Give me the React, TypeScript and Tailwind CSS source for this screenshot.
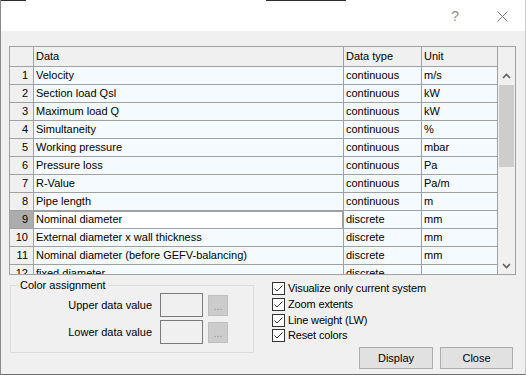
import React from "react"

const rows = [
  ["1", "Velocity", "continuous", "m/s"],
  ["2", "Section load Qsl", "continuous", "kW"],
  ["3", "Maximum load Q", "continuous", "kW"],
  ["4", "Simultaneity", "continuous", "%"],
  ["5", "Working pressure", "continuous", "mbar"],
  ["6", "Pressure loss", "continuous", "Pa"],
  ["7", "R-Value", "continuous", "Pa/m"],
  ["8", "Pipe length", "continuous", "m"],
  ["9", "Nominal diameter", "discrete", "mm"],
  ["10", "External diameter x wall thickness", "discrete", "mm"],
  ["11", "Nominal diameter (before GEFV-balancing)", "discrete", "mm"],
  ["12", "fixed diameter", "discrete", ""],
]

const options = ["Visualize only current system", "Zoom extents", "Line weight (LW)", "Reset colors"]

function Chevron({ down }: { down?: boolean }) {
  return (
    <svg width="9" height="6" viewBox="0 0 9 6" className={down ? "rotate-180" : ""}>
      <path d="M1 5 L4.5 1.5 L8 5" fill="none" stroke="#606060" strokeWidth="1.6" />
    </svg>
  )
}

function CheckBox({ label }: { label: string }) {
  return (
    <div className="flex h-[15.7px] items-center gap-[3px]">
      <div className="flex h-[13px] w-[13px] items-center justify-center border border-[#333333] bg-white">
        <svg width="11" height="11" viewBox="0 0 11 11">
          <path d="M1.5 5.5 L4 8 L9.5 2.5" fill="none" stroke="#333333" strokeWidth="1" />
        </svg>
      </div>
      <span className="text-[11px] leading-none tracking-[-0.15px] text-black">{label}</span>
    </div>
  )
}

function ColorRow({ label }: { label: string }) {
  return (
    <div className="flex items-center">
      <span className="w-[149px] pr-[8px] text-right text-[11px] text-black">{label}</span>
      <div className="h-[24px] w-[43px] border border-[#7a7a7a]" />
      <div className="ml-[5px] flex h-[21px] w-[20px] items-end justify-center border border-[#bfbfbf] bg-[#cccccc] pb-[3px] text-[10px] leading-none text-[#8c8c8c]">
        ...
      </div>
    </div>
  )
}

export default function App() {
  return (
    <div
      className="flex h-[375px] w-[526px] flex-col overflow-hidden border-b border-l border-r border-b-[#6e6e6e] border-l-[#8a8a8a] border-r-[#c8c8c8] bg-[#f0f0f0]"
      style={{ fontFamily: '"Liberation Sans", Arial, sans-serif' }}
    >
      {/* top edge of windows behind */}
      <div className="flex h-[1px] shrink-0">
        <div className="w-[25px] bg-[#2d2d2d]" />
        <div className="w-[240px] bg-white" />
        <div className="w-[80px] bg-[#2d2d2d]" />
        <div className="flex-1 bg-white" />
      </div>

      {/* title bar */}
      <div className="flex h-[30px] shrink-0 items-center justify-end bg-white pr-[17px]">
        <span className="mr-[38px] text-[14px] leading-none text-[#8f8f8f]">?</span>
        <svg width="11" height="11" viewBox="0 0 11 11">
          <path d="M0.5 0.5 L10.5 10.5 M10.5 0.5 L0.5 10.5" stroke="#7f7f7f" strokeWidth="1" />
        </svg>
      </div>

      {/* data grid */}
      <div className="ml-[8px] mt-[15px] flex h-[229px] w-[507px] shrink-0 border border-[#a0a0a0] text-[11px] text-black">
        <div className="flex w-[488px] flex-col overflow-hidden">
          <div className="flex h-[20px] shrink-0 border-b border-[#a0a0a0] bg-[#f0f0f0]">
            <div className="w-[24px] border-r border-[#a0a0a0]" />
            <div className="flex w-[310px] items-center border-r border-[#a0a0a0] pl-[2px]">Data</div>
            <div className="flex w-[78px] items-center border-r border-[#a0a0a0] pl-[2px]">Data type</div>
            <div className="flex w-[76px] items-center border-r border-[#a0a0a0] pl-[2px]">Unit</div>
          </div>
          {rows.map(([n, name, type, unit]) => {
            const sel = n === "9"
            return (
              <div key={n} className="flex h-[18px] shrink-0 border-b border-[#a0a0a0]">
                <div
                  className={`flex w-[24px] items-center justify-end border-r border-[#a0a0a0] pr-[5px] ${
                    sel ? "bg-[#acacac]" : "bg-[#f0f0f0]"
                  }`}
                >
                  {n}
                </div>
                <div
                  className={`flex w-[310px] items-center border-r border-[#a0a0a0] pl-[2px] ${
                    sel ? "bg-white shadow-[inset_0_1px_0_#a0a0a0,inset_-1px_0_0_#a0a0a0]" : "bg-[#f5faff]"
                  }`}
                >
                  {name}
                </div>
                <div className="flex w-[78px] items-center border-r border-[#a0a0a0] bg-[#f5faff] pl-[2px]">{type}</div>
                <div className="flex w-[76px] items-center border-r border-[#a0a0a0] bg-[#f5faff] pl-[2px]">{unit}</div>
              </div>
            )
          })}
        </div>
        <div className="flex w-[17px] flex-col bg-[#f0f0f0]">
          <div className="h-[20px] shrink-0" />
          <div className="flex h-[17px] shrink-0 items-center justify-center">
            <Chevron />
          </div>
          <div className="mx-[1px] mt-[1px] h-[82px] shrink-0 bg-[#cdcdcd]" />
          <div className="flex-1" />
          <div className="flex h-[17px] shrink-0 items-center justify-center">
            <Chevron down />
          </div>
        </div>
      </div>

      {/* bottom area */}
      <div className="flex flex-1">
        <div className="relative ml-[9px] mt-[10px] h-[68px] w-[244px] border border-[#dcdcdc]">
          <span className="absolute left-[7px] top-[-8px] bg-[#f0f0f0] px-[2px] text-[11px] leading-[14px] text-black">
            Color assignment
          </span>
          <div className="flex flex-col gap-[3px] pt-[7px]">
            <ColorRow label="Upper data value" />
            <ColorRow label="Lower data value" />
          </div>
        </div>
        <div className="ml-[18px] flex flex-1 flex-col pr-[12px] pt-[6px]">
          <div className="flex flex-col">
            {options.map((o) => (
              <CheckBox key={o} label={o} />
            ))}
          </div>
          <div className="mt-[3px] flex justify-end gap-[7px]">
            <button className="h-[22px] w-[74px] border border-[#adadad] bg-[#e1e1e1] text-[11px] text-black">
              Display
            </button>
            <button className="h-[22px] w-[73px] border border-[#adadad] bg-[#e1e1e1] text-[11px] text-black">
              Close
            </button>
          </div>
        </div>
      </div>
    </div>
  )
}
